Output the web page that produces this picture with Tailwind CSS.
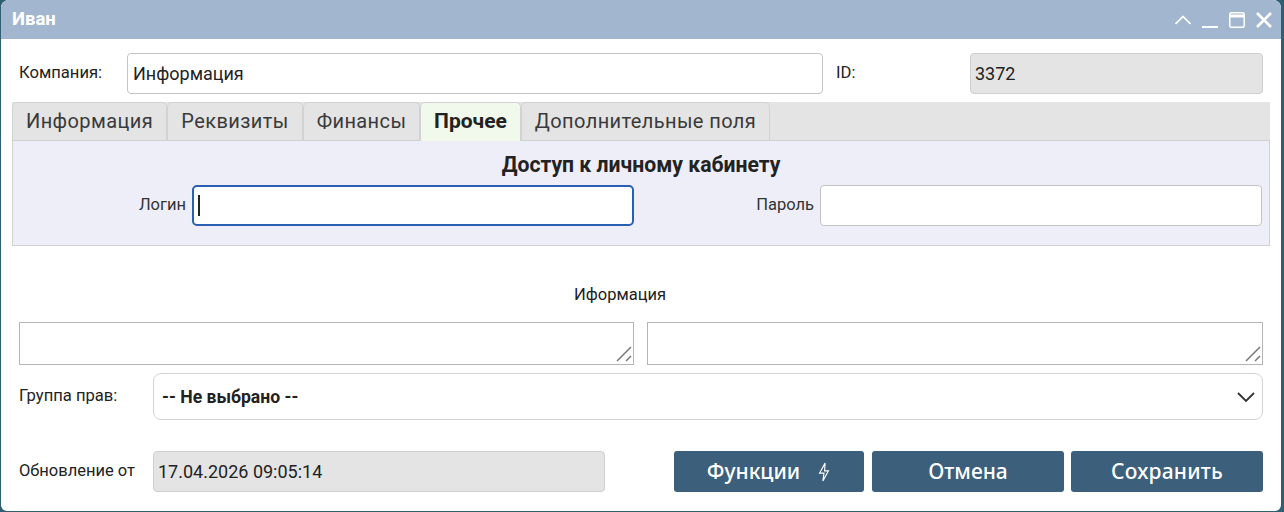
<!DOCTYPE html>
<html lang="ru">
<head>
    <meta charset="UTF-8">
    <title>Иван</title>
    <script src="https://cdn.jsdelivr.net/npm/@tailwindcss/browser@4"></script>
</head>
<body class="bg-[#2f5f70] h-[512px] w-[1284px] overflow-hidden font-['Roboto',sans-serif] text-[#222]">
    <div class="ml-px w-[1280px] h-[511px] bg-white rounded-b-[6px] rounded-t-[8px] overflow-hidden">
        <!-- Title bar -->
        <div class="h-[39px] bg-[#a2b7cf] flex items-center justify-between pl-[11px] pr-[9px]">
            <span class="text-white font-bold text-[18.5px]">Иван</span>
            <div class="flex items-center gap-[11px]">
                <svg class="w-4 h-4" viewBox="0 0 16 16" fill="none" stroke="white" stroke-width="1.7"><path d="M.5 12 8 4.500 15.500 12"/></svg>
                <svg class="w-4 h-4" viewBox="0 0 16 16" fill="none" stroke="white" stroke-width="2"><path d="M0 15h16"/></svg>
                <svg class="w-4 h-4" viewBox="0 0 16 16" fill="none" stroke="white"><rect x=".8" y=".8" width="14.400" height="14.400" rx="1.500" stroke-width="1.500"/><path d="M1 4h14" stroke-width="3"/></svg>
                <svg class="w-4 h-4" viewBox="0 0 16 16" fill="none" stroke="white" stroke-width="2.600"><path d="M1 1l14 14M15 1 1 15"/></svg>
            </div>
        </div>

        <!-- Company row -->
        <div class="flex items-center mt-[14px] pl-[18px] h-[41px]">
            <label class="w-[108px] text-[16.6px]">Компания:</label>
            <div class="w-[696px] h-[41px] border border-[#c4c4c4] rounded-[4px] flex items-center pl-[5px] text-[18px]">Информация</div>
            <label class="ml-[13px] w-[134px] text-[16.6px]">ID:</label>
            <div class="w-[293px] h-[41px] bg-[#e4e4e4] border border-[#cfcfcf] rounded-[4px] flex items-center pl-[4px] text-[18px]">3372</div>
        </div>

        <!-- Tabs -->
        <div class="ml-[11px] w-[1258px] mt-2 h-[39px] bg-[#e4e4e4] flex border-b border-[#d2d2d2] text-[20px] tracking-[0.4px] text-[#3a3a3a]">
            <div class="w-[155px] pb-px border border-b-0 border-[#d2d2d2] rounded-t-[5px] flex items-center justify-center">Информация</div>
            <div class="w-[136px] pb-px border border-b-0 border-[#d2d2d2] rounded-t-[5px] flex items-center justify-center">Реквизиты</div>
            <div class="w-[117px] pb-px border border-b-0 border-[#d2d2d2] rounded-t-[5px] flex items-center justify-center">Финансы</div>
            <div class="w-[101px] h-[39px] pb-px bg-[#f0f9ec] border border-b-0 border-[#d2d2d2] rounded-t-[5px] flex items-center justify-center font-bold text-[#222] text-[21px] tracking-normal">Прочее</div>
            <div class="w-[249px] pb-px border border-b-0 border-[#d2d2d2] rounded-t-[5px] flex items-center justify-center">Дополнительные поля</div>
        </div>

        <!-- Personal account panel -->
        <div class="ml-[11px] w-[1258px] h-[105px] bg-[#eeeef9] border border-t-0 border-[#d2d2d2]">
            <div class="text-center font-bold text-[21.2px] pt-[12px] leading-[24px]">Доступ к личному кабинету</div>
            <div class="flex items-center mt-[8px] h-[41px]">
                <label class="w-[173px] text-right text-[16.5px] text-[#333]">Логин</label>
                <div class="ml-[6px] w-[442px] h-[41px] bg-white border-2 border-[#2a5fb4] rounded-[5px] flex items-center pl-[4px]">
                    <div class="w-[2px] h-[21px] bg-[#222]"></div>
                </div>
                <label class="w-[180px] text-right text-[16.5px] text-[#333]">Пароль</label>
                <div class="ml-[6px] w-[442px] h-[41px] bg-white border border-[#c4c4c4] rounded-[4px]"></div>
            </div>
        </div>

        <div class="text-center text-[16.5px] mt-[39px] leading-[20px] w-[1238px]">Иформация</div>

        <!-- Info textareas -->
        <div class="flex gap-[13px] pl-[18px] mt-[17px]">
            <div class="relative w-[615px] h-[43px] border border-[#b5b5b5]">
                <svg class="absolute right-[1px] bottom-[2px] w-[16px] h-[16px]" viewBox="0 0 16 16" fill="none" stroke="#777" stroke-width="1.5"><path d="M1 15 15 1M10 15l5-5"/></svg>
            </div>
            <div class="relative w-[616px] h-[43px] border border-[#b5b5b5]">
                <svg class="absolute right-[1px] bottom-[2px] w-[16px] h-[16px]" viewBox="0 0 16 16" fill="none" stroke="#777" stroke-width="1.5"><path d="M1 15 15 1M10 15l5-5"/></svg>
            </div>
        </div>

        <!-- Rights group -->
        <div class="flex items-center pl-[18px] mt-2 h-[47px]">
            <label class="w-[134px] text-[16.6px]">Группа прав:</label>
            <div class="w-[1110px] h-[47px] border border-[#d4d4d8] rounded-[8px] flex items-center justify-between pl-[8px] pr-[6px] pt-px font-bold text-[17.6px]">
                <span>-- Не выбрано --</span>
                <svg class="w-[20px] h-[20px]" viewBox="0 0 20 20" fill="none" stroke="#333" stroke-width="1.8"><path d="M2 6l8 8 8-8"/></svg>
            </div>
        </div>

        <!-- Footer -->
        <div class="flex items-center pl-[18px] mt-[31px] h-[41px]">
            <label class="w-[134px] text-[16.5px]">Обновление от</label>
            <div class="w-[452px] h-[41px] bg-[#e4e4e4] border border-[#cfcfcf] rounded-[4px] flex items-center pl-[4px] text-[18px]">17.04.2026 09:05:14</div>
            <div class="ml-[69px] flex font-['Noto_Sans',sans-serif] font-medium text-[21px] text-white">
                <button class="w-[190px] h-[41px] pt-px bg-[#3c607c] rounded-[3px] flex items-center justify-center gap-[17px]">
                    Функции
                    <svg class="w-[14px] h-[20px]" viewBox="0 0 12 18" fill="none" stroke="white" stroke-width="1"><path d="M7 1 2 10h4l-1 7 5-9H6.500z"/></svg>
                </button>
                <button class="ml-2 w-[192px] h-[41px] pt-px bg-[#3c607c] rounded-[3px]">Отмена</button>
                <button class="ml-[7px] w-[192px] h-[41px] pt-px bg-[#3c607c] rounded-[3px] tracking-[0.2px]">Сохранить</button>
            </div>
        </div>
    </div>
</body>
</html>
